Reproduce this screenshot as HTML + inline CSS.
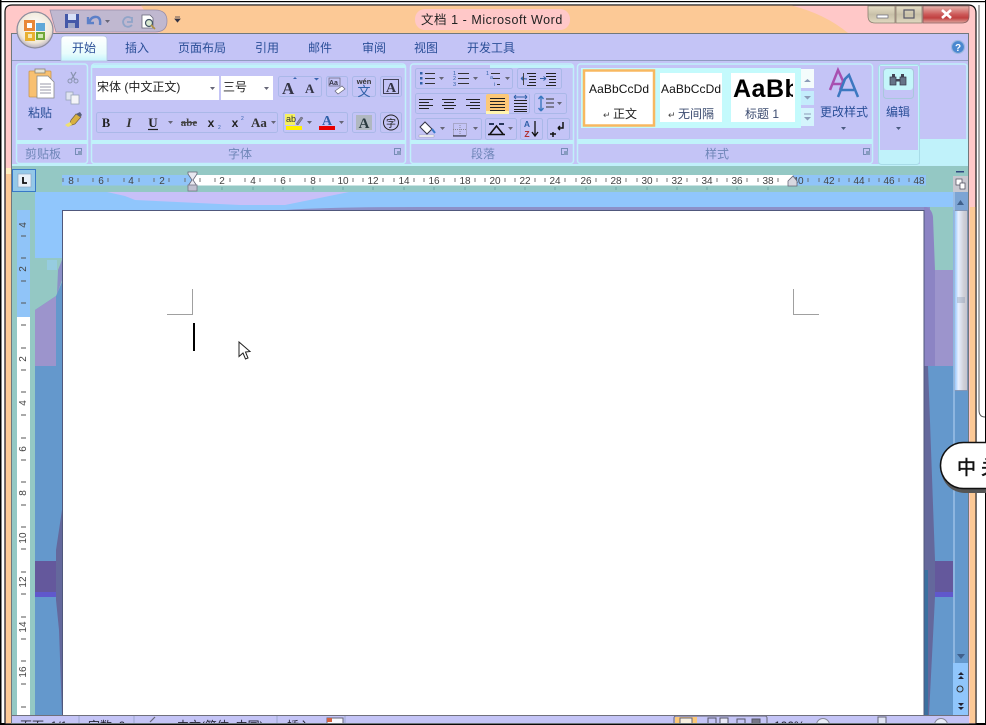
<!DOCTYPE html>
<html><head><meta charset="utf-8"><title>文档 1 - Microsoft Word</title>
<style>
html,body{margin:0;padding:0;background:#fff;width:986px;height:725px;overflow:hidden}
svg{display:block;font-family:"Liberation Sans","Noto Sans CJK SC",sans-serif}
.t{font-size:12px;fill:#2b4f98}
.g{font-size:12px;fill:#6f86b8}
.r{font-size:10px;fill:#444;text-anchor:middle}
.b{fill:#c4c4f6;stroke:#aab8e8;stroke-width:1}
.d{fill:#4a5a80}
.gp{fill:#c4c4f6;stroke:#c0f0fa;stroke-width:1.5}
</style></head><body>
<svg width="986" height="725" viewBox="0 0 986 725" xmlns="http://www.w3.org/2000/svg">
<defs>
<linearGradient id="tab" x1="0" y1="0" x2="0" y2="1"><stop offset="0" stop-color="#fff"/><stop offset=".7" stop-color="#e8fcfc"/><stop offset="1" stop-color="#c4f4fc"/></linearGradient>
<linearGradient id="cl" x1="0" y1="0" x2="0" y2="1"><stop offset="0" stop-color="#e8b8b0"/><stop offset=".5" stop-color="#cc5858"/><stop offset=".7" stop-color="#c04040"/><stop offset="1" stop-color="#e0a8a0"/></linearGradient>
<linearGradient id="mn" x1="0" y1="0" x2="0" y2="1"><stop offset="0" stop-color="#e8e0c8"/><stop offset=".5" stop-color="#c8c0a8"/><stop offset="1" stop-color="#e0d8c0"/></linearGradient>
<radialGradient id="orb" cx=".5" cy=".4" r=".6"><stop offset="0" stop-color="#fff"/><stop offset=".75" stop-color="#f0e8d8"/><stop offset="1" stop-color="#b8b0c0"/></radialGradient>
<linearGradient id="th" x1="0" y1="0" x2="1" y2="0"><stop offset="0" stop-color="#90c4fc"/><stop offset=".3" stop-color="#e8f0ff"/><stop offset=".7" stop-color="#d0d0d8"/><stop offset="1" stop-color="#c4c4cc"/></linearGradient>
</defs>

<!-- outer frames -->
<rect width="986" height="725" fill="#fff"/>
<rect x="0" y="0" width="1.5" height="725" fill="#000"/>
<rect x="0" y="1" width="986" height="1.2" fill="#000"/>
<rect x="985" y="0" width="1" height="725" fill="#000"/>
<rect x="0" y="723" width="986" height="2" fill="#000"/>
<path d="M979 5V410q0 7 6 7" fill="none" stroke="#555" stroke-width="1"/>

<!-- window -->
<path d="M5 724V12q0-7 7-7H968q8 0 8 8V724Z" fill="#ffc8c8" stroke="#111" stroke-width="1.2"/>
<path d="M141 5.6H792Q825 14 848 33H160Z" fill="#fcc996"/>
<rect x="6" y="168" width="5" height="6" fill="#fff0c0"/>
<rect x="6" y="174" width="5" height="549" fill="#fcc996"/>
<rect x="970" y="207" width="5.4" height="516" fill="#fcc996"/>
<rect x="415" y="9" width="155" height="21" rx="10" fill="#ffc8c8"/>
<text x="421" y="24" font-size="12.5" fill="#222" letter-spacing=".55">文档 1 - Microsoft Word</text>

<!-- window controls -->
<path d="M868 6H895V23H875q-7 0-7-7Z" fill="url(#mn)" stroke="#8a8070" stroke-width=".8"/>
<rect x="896" y="6" width="26" height="17" fill="url(#mn)" stroke="#8a8070" stroke-width=".8"/>
<path d="M923 6H969V16q0 7-7 7H923Z" fill="url(#cl)" stroke="#8a6060" stroke-width=".8"/>
<rect x="877" y="15" width="11" height="3" fill="#fff" stroke="#667" stroke-width=".7"/>
<rect x="904" y="10" width="10" height="8" fill="none" stroke="#556" stroke-width="1.2"/>
<path d="M942 10L951 18M951 10L942 18" stroke="#fff" stroke-width="2.6"/>

<!-- QAT -->
<path d="M50 10H155q12 0 12 11t-12 11H56Z" fill="#c0b8d0" stroke="#988ea8" stroke-width=".8"/>
<rect x="65" y="14" width="14" height="14" fill="#4458a8"/><rect x="68" y="14" width="8" height="6" fill="#d8e0f8"/><rect x="68" y="23" width="7" height="5" fill="#a0a8c8"/>
<path d="M88 17v6h6M89 23q2-7 8-6 4 1 3 8" fill="none" stroke="#5c80c8" stroke-width="2.4"/>
<path d="M105 20h5l-2.500 3Z" fill="#667"/>
<path d="M132 17v5h-5M131 18q-3-2-6 0-4 4 0 8 4 2 7-1" fill="none" stroke="#90a4c8" stroke-width="1.800"/>
<path d="M142 15h8l3 3v10h-11Z" fill="#fff" stroke="#667" stroke-width=".8"/><circle cx="149" cy="23" r="3.500" fill="#d8e8d0" stroke="#456" stroke-width="1.200"/><path d="M151 25l4 4" stroke="#b09040" stroke-width="1.600"/>
<path d="M175 17h5M175 19h5l-2.500 3Z" fill="#334" stroke="#334" stroke-width=".8"/>

<!-- Tab bar + ribbon -->
<rect x="11.500" y="33.500" width="957" height="690" fill="#c4c4f6" stroke="#70787c" stroke-width="1"/>
<rect x="12" y="60" width="956" height="106" fill="#c4c4f6"/>
<rect x="12" y="60" width="956" height="1" fill="#909cc0"/>
<rect x="12" y="164" width="956" height="2" fill="#c0f0fa"/>
<path d="M61 61V40q0-4 4-4H103q4 0 4 4V61Z" fill="url(#tab)" stroke="#b4c4e0" stroke-width=".8"/>
<text x="72" y="52" class="t">开始</text>
<text x="125" y="52" class="t">插入</text>
<text x="178" y="52" class="t">页面布局</text>
<text x="255" y="52" class="t">引用</text>
<text x="308" y="52" class="t">邮件</text>
<text x="362" y="52" class="t">审阅</text>
<text x="414" y="52" class="t">视图</text>
<text x="467" y="52" class="t">开发工具</text>
<circle cx="958" cy="47" r="6.500" fill="#4a88d0" stroke="#a0b8e0" stroke-width="1.200"/>
<text x="958" y="51" font-size="10" font-weight="bold" fill="#fff" text-anchor="middle">?</text>

<!-- Office orb -->
<circle cx="35" cy="30" r="18" fill="url(#orb)" stroke="#8c8c9c" stroke-width="1.200"/>
<rect x="24" y="20" width="11" height="11" fill="#e88838"/><rect x="36" y="23" width="9" height="8" fill="#60a8d8"/><rect x="25" y="32" width="10" height="9" fill="#e8b030"/><rect x="36" y="32" width="9" height="8" fill="#70a838"/>
<rect x="27" y="23" width="5" height="5" fill="#fff"/><rect x="28" y="34" width="4" height="4" fill="#f8e8b0"/><rect x="38" y="34" width="5" height="4" fill="#d0e8b0"/>

<!-- Groups -->
<rect x="16.500" y="64" width="71" height="99.500" rx="3" class="gp"/>
<rect x="91.500" y="64" width="314" height="99.500" rx="3" class="gp"/>
<rect x="410.500" y="64" width="163" height="99.500" rx="3" class="gp"/>
<rect x="577.500" y="64" width="295" height="99.500" rx="3" class="gp"/>
<rect x="920" y="139" width="48" height="26" fill="#c0f2fa"/>
<path d="M920 64h44q3 0 3 3v72" fill="none" stroke="#c0f0fa" stroke-width="1.500"/>
<rect x="878.500" y="64.500" width="41" height="100" rx="3" fill="#c0f2fa" stroke="#a8dce8" stroke-width="1"/>
<rect x="880" y="66" width="38" height="84" fill="#c4c4f6"/>
<rect x="17" y="140" width="70" height="4" fill="#c0f2fa"/>
<rect x="92" y="140" width="313" height="4" fill="#c0f2fa"/>
<rect x="411" y="140" width="162" height="4" fill="#c0f2fa"/>
<rect x="578" y="139" width="294" height="5" fill="#c0f2fa"/>
<rect x="92" y="65" width="313" height="3" fill="#c0f2fa"/>
<rect x="490" y="65" width="83" height="3" fill="#c0f2fa"/>
<text x="25" y="158" class="g">剪贴板</text><text x="228" y="158" class="g">字体</text><text x="471" y="158" class="g">段落</text><text x="705" y="158" class="g">样式</text>
<g fill="none" stroke="#6e86b0" stroke-width=".9"><rect x="75.500" y="148.500" width="6" height="6"/><rect x="394.500" y="148.500" width="6" height="6"/><rect x="561.500" y="148.500" width="6" height="6"/><rect x="863.500" y="148.500" width="6" height="6"/></g>
<g fill="#889cc0"><rect x="78" y="151" width="4" height="4"/><rect x="397" y="151" width="4" height="4"/><rect x="564" y="151" width="4" height="4"/><rect x="866" y="151" width="4" height="4"/></g>

<!-- Clipboard -->
<rect x="29" y="71" width="22" height="26" rx="1" fill="#f8c070" stroke="#c89850" stroke-width=".8"/>
<rect x="35" y="69" width="10" height="4" fill="#e8e4d8" stroke="#8a8470" stroke-width=".8"/>
<path d="M37 76h11l6 6v16H37Z" fill="#fff" stroke="#888" stroke-width=".8"/><path d="M40 84h11M40 87h11M40 90h11M40 93h11" stroke="#99a" stroke-width=".9"/>
<text x="28" y="117" class="t">粘贴</text><path d="M37 128h6l-3 3Z" class="d"/>
<path d="M71 72l4 8M76 72l-5 8" stroke="#8a94b0" stroke-width="1.200"/><circle cx="70" cy="81" r="2" fill="none" stroke="#8a94b0"/><circle cx="76" cy="81" r="2" fill="none" stroke="#8a94b0"/>
<rect x="66" y="92" width="7" height="8" fill="#e0e4f0" stroke="#98a4b8" stroke-width=".8"/><rect x="71" y="95" width="8" height="9" fill="#f4f4f8" stroke="#98a4b8" stroke-width=".8"/>
<path d="M76 114l5 3-6 7-6 2 2-6Z" fill="#d8b040" stroke="#706040" stroke-width=".7"/><path d="M65 125l5-3 2 3-4 2Z" fill="#f0e070"/><path d="M76 114l4-2 2 3-2 2Z" fill="#586078"/>

<!-- Font group -->
<rect x="96" y="76" width="123" height="24" fill="#fff"/>
<rect x="221" y="76" width="52" height="24" fill="#fff"/>
<text x="97" y="91" font-size="12" fill="#222">宋体 (中文正文)</text>
<text x="223" y="91" font-size="12" fill="#222">三号</text>
<path d="M210 87h5l-2.500 3Z M264 87h5l-2.500 3Z" fill="#667"/>
<rect x="278.500" y="76.500" width="43" height="20" rx="2" class="b"/>
<text x="282" y="94" font-family="Liberation Serif" font-size="17" font-weight="bold" fill="#334">A</text>
<text x="305" y="93" font-family="Liberation Serif" font-size="13" font-weight="bold" fill="#334">A</text>
<path d="M293 79l2-2 2 2Z M314 78h5l-2.500 2.500Z" fill="#3a64b0"/>
<rect x="326.500" y="76.500" width="21" height="20" rx="2" class="b"/>
<text x="329" y="85" font-size="7" font-weight="bold" fill="#334">Aa</text><rect x="329" y="78" width="11" height="8" fill="none" stroke="#667" stroke-width=".7"/><path d="M335 91l7-5 3 3-7 5Z" fill="#fff" stroke="#667" stroke-width=".7"/>
<rect x="352.500" y="76.500" width="23" height="20" rx="2" class="b"/>
<text x="364" y="84" font-size="7.500" font-weight="bold" fill="#333" text-anchor="middle">wén</text><text x="364" y="96" font-size="13" fill="#3060a8" text-anchor="middle">文</text>
<rect x="380.500" y="76.500" width="21" height="20" rx="2" class="b"/><rect x="383.500" y="79.500" width="15" height="14" fill="none" stroke="#334" stroke-width=".9"/>
<text x="391" y="92" font-family="Liberation Serif" font-size="14" font-weight="bold" fill="#334" text-anchor="middle">A</text>

<rect x="96.500" y="112.500" width="181" height="20" rx="2" class="b"/>
<text x="106" y="127" font-family="Liberation Serif" font-size="12.500" font-weight="bold" fill="#222" text-anchor="middle">B</text>
<text x="129" y="127" font-family="Liberation Serif" font-size="13" font-style="italic" font-weight="bold" fill="#333" text-anchor="middle">I</text>
<text x="153" y="127" font-family="Liberation Serif" font-size="13" font-weight="bold" fill="#222" text-anchor="middle">U</text><path d="M148 129.500h10" stroke="#222" stroke-width="1.200"/>
<path d="M168 121h5l-2.500 3Z" fill="#667"/>
<text x="189" y="126" font-family="Liberation Serif" font-size="11" font-weight="bold" fill="#444" text-anchor="middle">abe</text><path d="M181 122.500h16" stroke="#444"/>
<text x="211" y="127" font-size="12" font-weight="bold" fill="#222" text-anchor="middle">x</text><text x="218" y="129" font-size="5" fill="#3a64b0">2</text>
<text x="235" y="127" font-size="12" font-weight="bold" fill="#222" text-anchor="middle">x</text><text x="241" y="120" font-size="5" fill="#3a64b0">2</text>
<text x="259" y="127" font-family="Liberation Serif" font-size="13" font-weight="bold" fill="#333" text-anchor="middle">Aa</text>
<path d="M271 121h5l-2.500 3Z" fill="#667"/>
<rect x="283.500" y="112.500" width="64" height="20" rx="2" class="b"/>
<rect x="285" y="114" width="10" height="11" fill="#f4f060"/><text x="286" y="122" font-size="9" fill="#333">ab</text><path d="M296 124l5-7 2 1-5 7Z" fill="#889" stroke="#556" stroke-width=".5"/><rect x="286" y="126" width="16" height="4" fill="#fff000"/>
<path d="M307 121h5l-2.500 3Z M339 121h5l-2.500 3Z" fill="#667"/>
<text x="327" y="125" font-family="Liberation Serif" font-size="14" font-weight="bold" fill="#3060a8" text-anchor="middle">A</text><rect x="319" y="126" width="16" height="4" fill="#e80000"/>
<rect x="352.500" y="112.500" width="23" height="20" rx="2" class="b"/><rect x="356" y="115" width="16" height="15" fill="#b0b8c0"/>
<text x="364" y="128" font-family="Liberation Serif" font-size="15" font-weight="bold" fill="#2a3a40" text-anchor="middle">A</text>
<rect x="380.500" y="112.500" width="21" height="20" rx="2" class="b"/><circle cx="391" cy="122.500" r="7.500" fill="none" stroke="#222"/><text x="391" y="127" font-size="10" fill="#222" text-anchor="middle">字</text>

<!-- Paragraph -->
<rect x="415.500" y="68.500" width="97" height="20" rx="2" class="b"/>
<rect x="517.500" y="68.500" width="44" height="20" rx="2" class="b"/>
<path d="M425 73.500h10M425 78.500h10M425 83.500h10M458 73.500h11M458 78.500h11M458 83.500h11M491 73.500h9M493 78.500h7" stroke="#333" stroke-width="1"/>
<rect x="420" y="72" width="2.500" height="2.500" fill="#3060a8"/><rect x="420" y="77" width="2.500" height="2.500" fill="#3060a8"/><rect x="420" y="82" width="2.500" height="2.500" fill="#3060a8"/>
<text x="453" y="75" font-size="5.500" fill="#3060a8">1</text><text x="453" y="80" font-size="5.500" fill="#3060a8">2</text><text x="453" y="86" font-size="5.500" fill="#3060a8">3</text>
<text x="486" y="75" font-size="5.500" fill="#3060a8">1</text><text x="490" y="79" font-size="5.500" fill="#3060a8">a</text><text x="494" y="86" font-size="5.500" fill="#3060a8">i</text>
<path d="M497 84.500h3" stroke="#333"/>
<path d="M439 77h5l-2.500 3Z M473 77h5l-2.500 3Z M505 77h5l-2.500 3Z" fill="#667"/>
<path d="M527 73.500h9M529 76.500h7M529 79.500h7M529 82.500h7M527 85.500h9" stroke="#222" stroke-width="1.100"/><path d="M527 79l-6-.5M521 78.500l2.500-2M521 78.500l2.500 2" stroke="#3060a8" stroke-width="1"/><rect x="523" y="73" width="1" height="12" fill="#444"/>
<path d="M546 73.500h10M546 76.500h10M549 79.500h7M549 82.500h7M546 85.500h10" stroke="#222" stroke-width="1.100"/><path d="M540 78.500h6M546 78.500l-2.500-2M546 78.500l-2.500 2" stroke="#3060a8" stroke-width="1"/>

<rect x="415.500" y="93.500" width="114" height="20" rx="2" class="b"/>
<rect x="534.500" y="93.500" width="32" height="20" rx="2" class="b"/>
<rect x="486" y="94" width="23" height="20" rx="2" fill="#fcc878"/><rect x="486" y="111" width="23" height="3" fill="#fff4b0"/>
<path d="M419 99.500h14M419 102.500h10M419 105.500h14M419 108.500h10 M442 99.500h14M444 102.500h10M442 105.500h14M444 108.500h10 M466 99.500h14M470 102.500h10M466 105.500h14M470 108.500h10 M490 98.500h15M490 101.500h15M490 104.500h15M490 107.500h15M490 110.500h15 M514 100.500h13M514 103.500h13M514 106.500h13M514 109.500h13M514 111.500h13" stroke="#222" stroke-width="1.100"/>
<path d="M514 97h13M514 97l2-2M514 97l2 2M527 97l-2-2M527 97l-2 2" stroke="#3060a8" fill="none"/>
<path d="M541 96v15M541 96l-2.500 3M541 96l2.500 3M541 111l-2.500-3M541 111l2.500-3" stroke="#3a78c0" fill="none" stroke-width="1.400"/><path d="M546 99h8M546 103h8M546 107h8" stroke="#333"/><path d="M557 102h5l-2.500 3Z" fill="#667"/>

<rect x="415.500" y="118.500" width="66" height="21" rx="2" class="b"/>
<rect x="485.500" y="118.500" width="31" height="21" rx="2" class="b"/>
<rect x="520.500" y="118.500" width="22" height="21" rx="2" class="b"/>
<rect x="547.500" y="118.500" width="22" height="21" rx="2" class="b"/>
<path d="M425 122l7 7-5 5-7-7Z" fill="#fff" stroke="#334" stroke-width="1"/><path d="M432 129l3 4" stroke="#3878c8" stroke-width="2"/><rect x="419" y="135" width="15" height="2" fill="#fff" stroke="#889" stroke-width=".4"/>
<path d="M440 127h5l-2.500 3Z M473 127h5l-2.500 3Z M508 127h5l-2.500 3Z" fill="#667"/>
<rect x="453.500" y="123.500" width="13" height="12" fill="none" stroke="#889" stroke-dasharray="1 1"/><path d="M460 123v12M453 129.500h13" stroke="#889" stroke-dasharray="1 1"/><path d="M453 136h13" stroke="#223"/>
<path d="M488 134.500h17M490 134l6.500-8 6.500 8" stroke="#111" fill="none" stroke-width="1.600"/><path d="M489 124h5M504 124h-5" stroke="#124" stroke-width="1.800"/>
<text x="527" y="127" font-size="8.500" font-weight="bold" fill="#3060a8" text-anchor="middle">A</text><text x="527" y="137" font-size="8.500" font-weight="bold" fill="#b03030" text-anchor="middle">Z</text><path d="M535 121v15M532 132l3 4 3-4" stroke="#111" fill="none" stroke-width="1.300"/>
<path d="M563 122v6h-5M558 128l2-2M558 128l2 2M553 132v5M550 134h6" stroke="#111" fill="none" stroke-width="1.500"/>

<!-- Styles -->
<rect x="581" y="68" width="220" height="60" fill="#c4fafc"/>
<rect x="584" y="70.500" width="70" height="55" fill="#fff" stroke="#f8b860" stroke-width="2.500"/>
<rect x="660" y="73" width="62" height="49" fill="#fff"/>
<rect x="731" y="73" width="64" height="49" fill="#fff"/>
<text x="589" y="93" font-size="12" fill="#111" letter-spacing=".1">AaBbCcDd</text>
<text x="661" y="93" font-size="12" fill="#111" letter-spacing=".1">AaBbCcDd</text>
<svg x="733" y="70" width="60" height="36"><text x="0" y="27" font-size="25" font-weight="bold" fill="#000" letter-spacing=".5">AaBb</text></svg>
<text x="603" y="118" font-size="9" fill="#444">↵</text><text x="613" y="118" font-size="12" fill="#222">正文</text>
<text x="668" y="118" font-size="9" fill="#444">↵</text><text x="678" y="118" font-size="12" fill="#3c4c70">无间隔</text>
<text x="745" y="118" font-size="12" fill="#3c4c70">标题 1</text>
<rect x="801" y="69" width="13" height="19" fill="#f4fcfc"/><rect x="801" y="91" width="13" height="14" fill="#c4ecfc"/><rect x="801" y="108" width="13" height="18" fill="#d4f4fc"/>
<path d="M804 82l3.500-3 3.500 3Z M804 96h7l-3.500 3.500Z M804 117h7l-3.500 3.500Z" fill="#8c9cb8"/><path d="M804 114h7" stroke="#8c9cb8"/>
<path d="M830 90l8-20 5 11-3 9M833 84h8" fill="none" stroke="#a850b0" stroke-width="2.500"/>
<path d="M838 97l7-18 4-4 9 22M841 90h13" fill="none" stroke="#3c78c0" stroke-width="2.500"/>
<text x="820" y="116" class="t">更改样式</text><path d="M841 127h5l-2.500 3Z" class="d"/>

<!-- Edit -->
<rect x="883.500" y="68.500" width="30" height="30" rx="3" fill="#c4c4f6" stroke="#a8c8dc"/>
<rect x="884" y="69" width="29" height="21" rx="3" fill="#c4f6fa"/>
<rect x="892" y="74" width="3" height="3" fill="#445"/><rect x="901" y="74" width="3" height="3" fill="#445"/>
<rect x="890" y="77" width="6" height="8" fill="#667488" stroke="#334" stroke-width=".7"/><rect x="900" y="77" width="6" height="8" fill="#667488" stroke="#334" stroke-width=".7"/><rect x="896" y="79" width="4" height="2.500" fill="#445"/>
<text x="886" y="116" class="t">编辑</text><path d="M896 127h5l-2.500 3Z" class="d"/>

<!-- Document backdrop -->
<rect x="12" y="166" width="956" height="557" fill="#6498cc"/>
<rect x="12" y="166" width="942" height="26" fill="#94c8c4"/>
<rect x="35" y="192" width="919" height="18" fill="#90c6fc"/>
<path d="M107 192H349L285 205H240L135 200 125 196Z" fill="#c8c0f8"/>
<path d="M285 210Q330 207 420 207H930V210Z" fill="#8c90c8"/>
<rect x="12" y="192" width="23" height="524" fill="#94c8c4"/>
<rect x="35" y="210" width="27" height="50" fill="#90c6fc"/>
<path d="M35 258H62V282L56 296 35 310Z" fill="#94c8c4"/>
<path d="M47 260h10v10H47Z" fill="#96cce0"/>
<path d="M35 310L56 296V366H35Z" fill="#9c94cc"/>
<path d="M57 294L62 280V260L58 270Z" fill="#8c90c8"/>
<path d="M35 561H56V592H35Z" fill="#64589c"/>
<path d="M35 592H56V597H35Z" fill="#6058cc"/>
<path d="M62 510L56 550V600L59 630 62 715Z" fill="#64689c"/>
<!-- right backdrop -->
<rect x="930" y="207" width="23" height="63" fill="#94c8c4"/>
<rect x="935" y="270" width="18" height="96" fill="#9c94cc"/>
<path d="M924 207h2q6 2 7 10L935 270V366H928L924 366Z" fill="#8c84c4"/>
<path d="M924 366H928L935 560V597L929 715H924Z" fill="#64689c"/>
<rect x="924" y="570" width="4" height="145" fill="#3a70a0"/>
<rect x="935" y="561" width="18" height="31" fill="#64589c"/>
<rect x="935" y="592" width="18" height="5" fill="#6058cc"/>

<!-- Page -->
<rect x="62.500" y="210.500" width="861.500" height="505" fill="#fff" stroke="#50587c" stroke-width="1"/>
<path d="M167 314.500H192.500V289M793.500 289V314.500H819" fill="none" stroke="#a0a0a0" stroke-width="1"/>
<rect x="193" y="323" width="2" height="28" fill="#000"/>
<path d="M239 342V356.500L243 353 245.500 359 248 358 245.500 352 250 351.500Z" fill="#fff" stroke="#222" stroke-width="1"/>

<!-- tab selector -->
<rect x="12.500" y="169.500" width="23" height="22" fill="#94c8e8" stroke="#3878c8" stroke-width="1"/>
<rect x="18" y="174" width="13" height="13" fill="#e8f0f8" stroke="#90a8c8" stroke-width=".7"/>
<path d="M23 177v6h4" fill="none" stroke="#111" stroke-width="1.800"/>

<!-- H ruler -->
<rect x="62" y="175" width="130" height="10.500" fill="#90c4f8"/>
<rect x="192" y="175" width="601" height="10.500" fill="#fff"/>
<rect x="793" y="175" width="133" height="10.500" fill="#90c4f8"/>
<g>
<text x="71" y="184" class="r">8</text><text x="101" y="184" class="r">6</text><text x="131" y="184" class="r">4</text><text x="162" y="184" class="r">2</text>
<text x="222" y="184" class="r">2</text><text x="253" y="184" class="r">4</text><text x="283" y="184" class="r">6</text><text x="313" y="184" class="r">8</text>
<text x="343" y="184" class="r">10</text><text x="373" y="184" class="r">12</text><text x="404" y="184" class="r">14</text><text x="434" y="184" class="r">16</text><text x="465" y="184" class="r">18</text>
<text x="495" y="184" class="r">20</text><text x="525" y="184" class="r">22</text><text x="555" y="184" class="r">24</text><text x="586" y="184" class="r">26</text><text x="616" y="184" class="r">28</text>
<text x="647" y="184" class="r">30</text><text x="677" y="184" class="r">32</text><text x="707" y="184" class="r">34</text><text x="737" y="184" class="r">36</text><text x="768" y="184" class="r">38</text>
<text x="798" y="184" class="r">40</text><text x="829" y="184" class="r">42</text><text x="859" y="184" class="r">44</text><text x="889" y="184" class="r">46</text><text x="919" y="184" class="r">48</text>
</g>
<path d="M63 178v4M78 178v4M93 178v4M108 178v4M124 178v4M139 178v4M154 178v4M169 178v4M185 178v4M200 178v4M215 178v4M230 178v4M245 178v4M260 178v4M275 178v4M290 178v4M305 178v4M320 178v4M333 178v4M353 178v4M363 178v4M383 178v4M394 178v4M414 178v4M424 178v4M444 178v4M455 178v4M475 178v4M485 178v4M505 178v4M515 178v4M535 178v4M545 178v4M565 178v4M576 178v4M596 178v4M606 178v4M626 178v4M637 178v4M657 178v4M667 178v4M687 178v4M697 178v4M717 178v4M727 178v4M747 178v4M758 178v4M778 178v4M808 178v4M819 178v4M839 178v4M849 178v4M869 178v4M879 178v4M899 178v4M909 178v4" stroke="#666" stroke-width=".9"/>
<path d="M222 187v3M253 187v3M283 187v3M313 187v3M343 187v3M373 187v3M404 187v3M434 187v3M465 187v3M495 187v3M525 187v3M555 187v3M586 187v3M616 187v3M647 187v3M677 187v3M707 187v3M737 187v3M768 187v3" stroke="#70a8a8" stroke-width="1"/>
<path d="M188 172h9v2l-4 6 4 6v1h-9v-1l4-6-4-6Z" fill="#e8e8f0" stroke="#667" stroke-width=".8"/>
<rect x="188" y="185" width="9" height="6" fill="#c0c0d0" stroke="#778" stroke-width=".8"/>
<path d="M788 186v-5l5-5 4 5v5Z" fill="#d8d8e0" stroke="#667" stroke-width=".8"/>

<!-- V ruler -->
<rect x="17" y="210" width="13" height="107" fill="#90c4f8"/>
<rect x="17" y="317" width="13" height="399" fill="#fff"/>
<g>
<text transform="translate(26,225) rotate(-90)" class="r">4</text>
<text transform="translate(26,269) rotate(-90)" class="r">2</text>
<text transform="translate(26,359) rotate(-90)" class="r">2</text>
<text transform="translate(26,403) rotate(-90)" class="r">4</text>
<text transform="translate(26,449) rotate(-90)" class="r">6</text>
<text transform="translate(26,493) rotate(-90)" class="r">8</text>
<text transform="translate(26,538) rotate(-90)" class="r">10</text>
<text transform="translate(26,582) rotate(-90)" class="r">12</text>
<text transform="translate(26,627) rotate(-90)" class="r">14</text>
<text transform="translate(26,672) rotate(-90)" class="r">16</text>
</g>
<path d="M21 236h5M21 258h5M21 281h5M21 303h5M21 325h5M21 348h5M21 370h5M21 392h5M21 415h5M21 438h5M21 460h5M21 482h5M21 505h5M21 527h5M21 549h5M21 572h5M21 594h5M21 617h5M21 639h5M21 661h5M21 684h5M21 707h5" stroke="#555" stroke-width="1"/>

<!-- Scrollbar -->
<rect x="953" y="166" width="15" height="550" fill="#6498cc"/>
<rect x="953" y="166" width="15" height="26" fill="#94c8c4"/>
<rect x="953" y="192" width="15" height="18" fill="#7ca4d4"/>
<rect x="956" y="171" width="8" height="1.500" fill="#304880"/>
<rect x="953" y="176" width="15" height="16" fill="#c8c8d0"/>
<rect x="956" y="179" width="6" height="6" fill="#fff" stroke="#445" stroke-width=".7"/><rect x="960" y="183" width="5" height="6" fill="#fff" stroke="#445" stroke-width=".7"/>
<path d="M957 205l3.500-5 3.500 5Z" fill="#40608c"/>
<rect x="954.500" y="210.500" width="13" height="180" fill="url(#th)" stroke="#8090b0" stroke-width=".8"/>
<path d="M957 298h8M957 300h8M957 302h8" stroke="#8898b0" stroke-width=".8"/>
<rect x="953.500" y="192" width="1" height="524" fill="#b8d4f4"/>
<path d="M957 654h8l-4 5Z" fill="#40608c"/>
<rect x="953" y="663" width="15" height="53" fill="#90c6fc"/>
<path d="M958 675l3-3 3 3ZM958 679l3-3 3 3Z M958 703l3 3 3-3ZM958 707l3 3 3-3Z" fill="#223"/>
<circle cx="960" cy="689" r="3" fill="none" stroke="#333"/>

<!-- Status bar -->
<rect x="12" y="716" width="957" height="7" fill="#c4c4f6"/>
<rect x="12" y="715" width="957" height="1" fill="#70707c"/>
<path d="M79 716v7M134 716v7M277 716v7M345 716v7" stroke="#9ca8d0"/>
<svg x="12" y="716" width="957" height="7">
<text x="8" y="14" font-size="12" fill="#223">页面: 1/1</text>
<text x="76" y="14" font-size="12" fill="#223">字数: 0</text>
<text x="165" y="14" font-size="12" fill="#223">中文(简体, 中国)</text>
<text x="275" y="14" font-size="12" fill="#223">插入</text>
<path d="M138 6l5-5" stroke="#667" stroke-width="1.200"/>
<rect x="315" y="2" width="16" height="8" fill="#f8f8ff" stroke="#667"/><rect x="315" y="2" width="5" height="4" fill="#d06040"/>
<rect x="662" y="0" width="93" height="10" rx="2" fill="#c4c4f6" stroke="#667"/>
<rect x="663" y="1" width="22" height="9" fill="#fcc878"/>
<rect x="668" y="2" width="12" height="8" fill="#f8f0e0" stroke="#667"/>
<rect x="696" y="2" width="8" height="8" fill="none" stroke="#556"/>
<rect x="708" y="2" width="8" height="8" fill="#e8e8f8" stroke="#556"/>
<rect x="725" y="3" width="8" height="7" fill="none" stroke="#556"/>
<rect x="740" y="3" width="8" height="7" fill="#778" stroke="#556"/>
<text x="762" y="14" font-size="12" fill="#223">100%</text>
<circle cx="811" cy="9" r="6.500" fill="#e8ecf8" stroke="#889"/>
<rect x="866" y="1" width="8" height="10" fill="#e0e4f4" stroke="#667"/>
<circle cx="929" cy="9" r="6.500" fill="#e8ecf8" stroke="#889"/>
</svg>

<!-- IME pill -->
<svg x="936" y="438" width="50" height="60">
<rect x="5" y="6" width="80" height="49" rx="24" fill="#555"/>
<rect x="4.500" y="4.500" width="80" height="46" rx="23" fill="#fff" stroke="#111" stroke-width="1.500"/>
<text x="21" y="36" font-size="19" fill="#111" stroke="#111" stroke-width=".5">中</text>
<text x="45" y="36" font-size="19" fill="#111" stroke="#111" stroke-width=".5">关</text>
</svg>
</svg>
</body></html>
